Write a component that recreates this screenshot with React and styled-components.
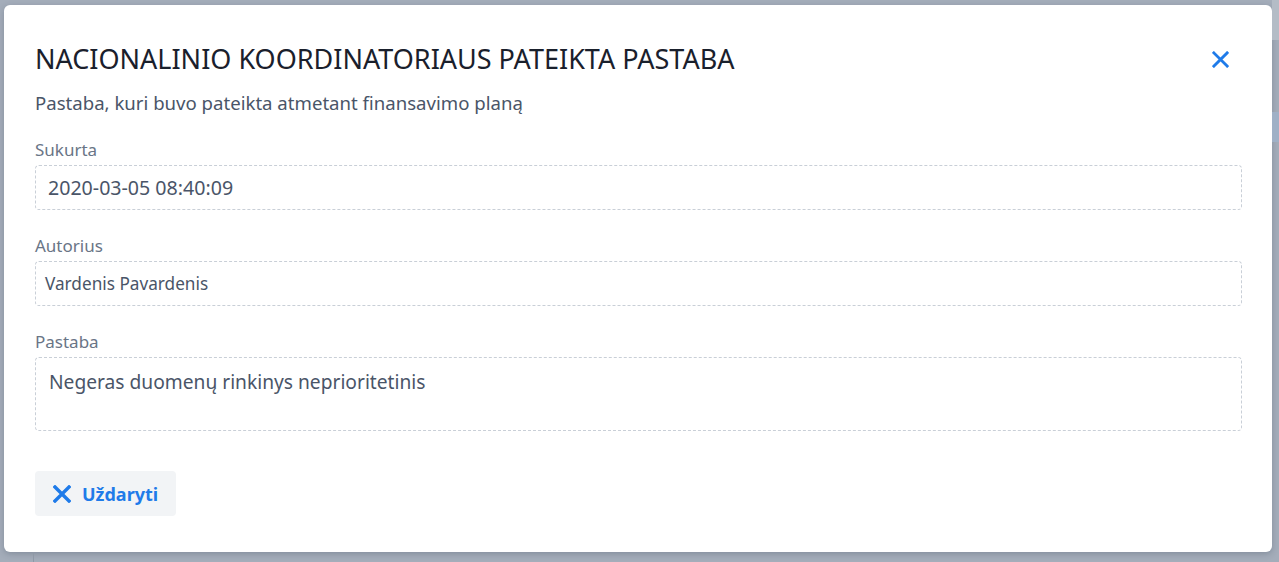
import React from "react";
import styled, { createGlobalStyle } from "styled-components";

const Global = createGlobalStyle`
  html, body { margin: 0; padding: 0; }
  body { font-family: "Noto Sans", "Open Sans", sans-serif; background: #a4adba; }
  * { box-sizing: border-box; }
`;

const Backdrop = styled.div`
  position: relative;
  width: 1279px;
  height: 562px;
  overflow: hidden;
  background: #a4adba;
  display: flex;
  align-items: flex-start;
  padding: 5px 0 0 4px;
`;

const PageLine = styled.div`
  position: absolute;
  left: 33px;
  top: 552px;
  width: 1px;
  height: 10px;
  background: #8f99a6;
`;

const PageStrip = styled.div`
  position: absolute;
  right: 0;
  top: ${(p) => p.$top}px;
  width: 7px;
  height: ${(p) => p.$h}px;
  background: ${(p) => p.$bg};
`;

const Modal = styled.div`
  width: 1268px;
  height: 547px;
  background: #ffffff;
  border-radius: 6px;
  box-shadow: 0 2px 6px rgba(40, 50, 70, 0.25);
  padding: 38px 30px 0 31px;
  display: flex;
  flex-direction: column;
`;

const Header = styled.div`
  display: flex;
  align-items: center;
  justify-content: space-between;
`;

const Title = styled.h2`
  margin: 0;
  font-size: 27px;
  line-height: 32px;
  font-weight: 400;
  color: #1a202c;
`;

const CloseIcon = styled.button`
  border: 0;
  background: none;
  padding: 0;
  margin-right: 13px;
  width: 17px;
  height: 17px;
  display: flex;
  color: #1f7be9;
  cursor: pointer;
`;

const Subtitle = styled.p`
  margin: 14px 0 22px;
  font-size: 18.6px;
  line-height: 27px;
  color: #4a5568;
`;

const Field = styled.div`
  display: flex;
  flex-direction: column;
  gap: 3px;
  margin-bottom: ${(p) => (p.$last ? 0 : 24)}px;
`;

const Label = styled.label`
  font-size: 17px;
  line-height: 24px;
  color: #697586;
`;

const Box = styled.div`
  border: 1px dashed #c9cfd7;
  border-radius: 4px;
  height: ${(p) => p.$h}px;
  padding: ${(p) => (p.$multi ? "10px" : "0")} ${(p) => p.$pl}px;
  display: flex;
  align-items: ${(p) => (p.$multi ? "flex-start" : "center")};
  font-size: ${(p) => p.$fs}px;
  line-height: 27px;
  color: #4a5568;
`;

const Footer = styled.div`
  margin-top: 40px;
  display: flex;
`;

const Button = styled.button`
  display: flex;
  align-items: center;
  gap: 11px;
  height: 45px;
  padding: 0 18px 0 18px;
  border: 0;
  border-radius: 4px;
  background: #f2f4f6;
  color: #1f7be9;
  font-family: inherit;
  font-size: 18px;
  font-weight: 700;
  cursor: pointer;
`;

const XIcon = ({ size = 18, stroke = 3.2 }) => (
  <svg width={size} height={size} viewBox="0 0 18 18" fill="none">
    <path d="M2 2 L16 16 M16 2 L2 16" stroke="currentColor" strokeWidth={stroke} strokeLinecap="square" />
  </svg>
);

export default function App() {
  return (
    <>
      <Global />
      <Backdrop>
        <PageLine />
        <PageStrip $top={0} $h={40} $bg="#b4bcc6" />
        <PageStrip $top={112} $h={30} $bg="#9fb0c6" />
        <Modal>
          <Header>
            <Title>NACIONALINIO KOORDINATORIAUS PATEIKTA PASTABA</Title>
            <CloseIcon aria-label="close">
              <XIcon size={17} stroke={3} />
            </CloseIcon>
          </Header>
          <Subtitle>Pastaba, kuri buvo pateikta atmetant finansavimo planą</Subtitle>
          <Field>
            <Label>Sukurta</Label>
            <Box $h={45} $pl={12} $fs={19.6}>2020-03-05 08:40:09</Box>
          </Field>
          <Field>
            <Label>Autorius</Label>
            <Box $h={45} $pl={9} $fs={17.2}>Vardenis Pavardenis</Box>
          </Field>
          <Field $last>
            <Label>Pastaba</Label>
            <Box $h={74} $pl={13} $fs={19.2} $multi>Negeras duomenų rinkinys neprioritetinis</Box>
          </Field>
          <Footer>
            <Button>
              <XIcon size={18} stroke={3.4} />
              Uždaryti
            </Button>
          </Footer>
        </Modal>
      </Backdrop>
    </>
  );
}
